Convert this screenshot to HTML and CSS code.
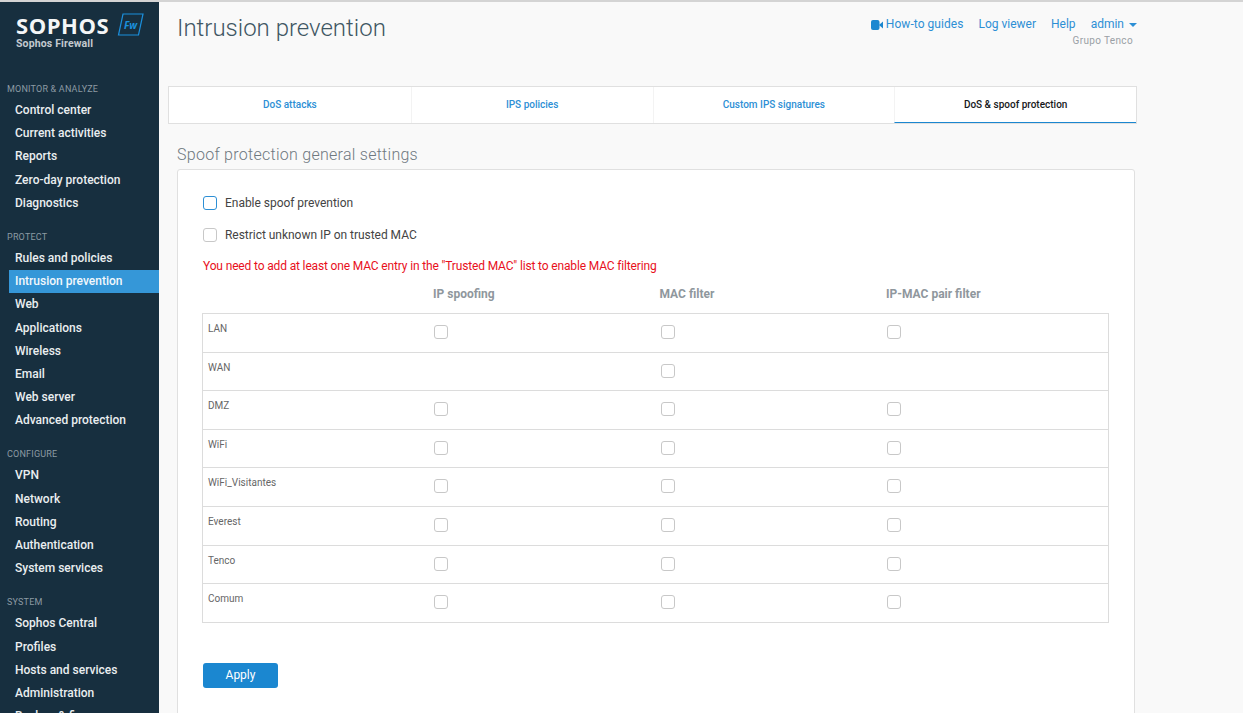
FILE: index.html
```html
<!DOCTYPE html>
<html lang="en">
<head>
<meta charset="utf-8">
<title>Intrusion prevention</title>
<link rel="stylesheet" href="styles.css">
</head>
<body>
<div class="app">
  <aside class="sidebar">
    <div class="brand">
      <div class="brand-top">
        <span class="brand-name">SOPHOS</span>
        <svg class="brand-badge" width="27" height="23" viewBox="0 0 27 23"><path d="M6 1H26L21.500 22H1.500Z" fill="none" stroke="#1b8fdc" stroke-width="1.200"/><text x="7" y="15.500" class="brand-fw">Fw</text></svg>
      </div>
      <div class="brand-sub">Sophos Firewall</div>
    </div>
    <nav class="nav">
      <div class="nav-head first">MONITOR &amp; ANALYZE</div>
      <a class="nav-item">Control center</a>
      <a class="nav-item">Current activities</a>
      <a class="nav-item">Reports</a>
      <a class="nav-item">Zero-day protection</a>
      <a class="nav-item">Diagnostics</a>
      <div class="nav-head">PROTECT</div>
      <a class="nav-item">Rules and policies</a>
      <a class="nav-item active">Intrusion prevention</a>
      <a class="nav-item">Web</a>
      <a class="nav-item">Applications</a>
      <a class="nav-item">Wireless</a>
      <a class="nav-item">Email</a>
      <a class="nav-item">Web server</a>
      <a class="nav-item">Advanced protection</a>
      <div class="nav-head">CONFIGURE</div>
      <a class="nav-item">VPN</a>
      <a class="nav-item">Network</a>
      <a class="nav-item">Routing</a>
      <a class="nav-item">Authentication</a>
      <a class="nav-item">System services</a>
      <div class="nav-head">SYSTEM</div>
      <a class="nav-item">Sophos Central</a>
      <a class="nav-item">Profiles</a>
      <a class="nav-item">Hosts and services</a>
      <a class="nav-item">Administration</a>
      <a class="nav-item">Backup &amp; firmware</a>
    </nav>
  </aside>
  <main class="main">
    <header class="topbar">
      <h1 class="title">Intrusion prevention</h1>
      <div class="account">
        <div class="links">
          <a class="link howto"><svg class="cam" width="12" height="10" viewBox="0 0 12 10"><rect x="0" y="0" width="8.500" height="10" rx="2" fill="#1b87d0"/><path d="M8 5L12 1.500V8.500Z" fill="#1b87d0"/></svg>How-to guides</a>
          <a class="link">Log viewer</a>
          <a class="link">Help</a>
          <a class="link">admin<span class="caret"></span></a>
        </div>
        <div class="org">Grupo Tenco</div>
      </div>
    </header>
    <div class="tabs">
      <a class="tab">DoS attacks</a>
      <a class="tab">IPS policies</a>
      <a class="tab">Custom IPS signatures</a>
      <a class="tab current">DoS &amp; spoof protection</a>
    </div>
    <h2 class="section-title">Spoof protection general settings</h2>
    <section class="card">
      <label class="check-row"><span class="box focus"></span>Enable spoof prevention</label>
      <label class="check-row second"><span class="box"></span>Restrict unknown IP on trusted MAC</label>
      <p class="warning">You need to add at least one MAC entry in the "Trusted MAC" list to enable MAC filtering</p>
      <div class="grid-head">
        <span></span><span>IP spoofing</span><span>MAC filter</span><span>IP-MAC pair filter</span>
      </div>
      <div class="grid">
        <div class="row"><span class="zone">LAN</span><span class="cell"><span class="box"></span></span><span class="cell"><span class="box"></span></span><span class="cell"><span class="box"></span></span></div>
        <div class="row"><span class="zone">WAN</span><span class="cell"></span><span class="cell"><span class="box"></span></span><span class="cell"></span></div>
        <div class="row"><span class="zone">DMZ</span><span class="cell"><span class="box"></span></span><span class="cell"><span class="box"></span></span><span class="cell"><span class="box"></span></span></div>
        <div class="row"><span class="zone">WiFi</span><span class="cell"><span class="box"></span></span><span class="cell"><span class="box"></span></span><span class="cell"><span class="box"></span></span></div>
        <div class="row"><span class="zone">WiFi_Visitantes</span><span class="cell"><span class="box"></span></span><span class="cell"><span class="box"></span></span><span class="cell"><span class="box"></span></span></div>
        <div class="row"><span class="zone">Everest</span><span class="cell"><span class="box"></span></span><span class="cell"><span class="box"></span></span><span class="cell"><span class="box"></span></span></div>
        <div class="row"><span class="zone">Tenco</span><span class="cell"><span class="box"></span></span><span class="cell"><span class="box"></span></span><span class="cell"><span class="box"></span></span></div>
        <div class="row"><span class="zone">Comum</span><span class="cell"><span class="box"></span></span><span class="cell"><span class="box"></span></span><span class="cell"><span class="box"></span></span></div>
      </div>
      <button class="apply" type="button">Apply</button>
    </section>
  </main>
</div>
</body>
</html>
```
FILE: styles.css
```css
* { box-sizing: border-box; }
html, body { margin: 0; height: 100%; overflow: hidden; }
body {
  font-family: Roboto, "Liberation Sans", sans-serif;
  background: #f9f9f9;
  border-top: 2px solid #d4d4d4;
  font-size: 12px;
  color: #444;
}
.app { display: flex; height: 711px; overflow: hidden; }

.sidebar { width: 159px; flex: none; background: #172f3f; color: #eaeef0; overflow: hidden; }
.brand { padding: 12px 0 0 16px; height: 81px; }
.brand-top { display: flex; align-items: flex-start; gap: 10px; }
.brand-name { font: 700 22px/22px "Open Sans", sans-serif; color: #f4f6f7; letter-spacing: .55px; width: 92px; white-space: nowrap; }
.brand-badge { flex: none; margin-top: -1px; margin-left: -1px; }
.brand-fw { font: italic 700 10px "Open Sans", sans-serif; fill: #1b8fdc; }
.brand-sub { font: 700 10.500px/12px Roboto, sans-serif; color: #c3cacf; margin-top: 2px; letter-spacing: .15px; }

.nav { display: flex; flex-direction: column; }
.nav-head { font-size: 9px; line-height: 12px; color: #8c9aa3; padding: 14px 0 0 7px; height: 30px; margin-top: 2px; letter-spacing: .2px; }
.nav-head.first { height: 16px; padding-top: 0; margin-top: 0; }
.nav-item { display: block; height: 23.200px; line-height: 23px; font-weight: 500; font-size: 12px; padding-left: 6px; margin-left: 9px; color: #eaeef0; white-space: nowrap; }
.nav-item.active { background: #3597d8; color: #f2f8fc; }

.main { flex: none; width: 969px; margin-left: 9px; position: relative; }
.topbar { display: flex; justify-content: space-between; align-items: flex-start; height: 84px; }
.title { margin: 11px 0 0 9px; font: 300 24px/30px Roboto, sans-serif; color: #3f5663; }
.account { display: flex; flex-direction: column; align-items: flex-end; padding-top: 15px; }
.links { display: flex; gap: 15px; line-height: 15px; }
.link { color: #2d8fd5; font-size: 12px; display: flex; align-items: center; }
.howto { letter-spacing: .05px; }
.cam { margin-right: 3px; }
.caret { display: inline-block; width: 0; height: 0; border-left: 4px solid transparent; border-right: 4px solid transparent; border-top: 4px solid #2d8fd5; margin-left: 5px; }
.org { font-size: 10px; color: #9aa0a5; line-height: 12px; margin-top: 3px; margin-right: 4px; letter-spacing: .35px; }

.tabs { display: grid; grid-template-columns: repeat(4, 1fr); height: 38px; background: #fff; border: 1px solid #e0e0e0; }
.tab { display: flex; align-items: center; justify-content: center; padding-bottom: 2px; font-size: 10px; font-weight: 500; color: #2d8fd5; border-left: 1px solid #f3f3f3; }
.tab:first-child { border-left: 0; }
.tab.current { color: #16181a; padding-bottom: 0; border-bottom: 1.500px solid #1b87d0; }

.section-title { margin: 21px 0 0 9px; font: 300 16px/20px Roboto, sans-serif; color: #6f787f; letter-spacing: .27px; }
.card { margin: 4px 2px 0 9px; height: 560px; background: #fff; border: 1px solid #e0e0e0; border-radius: 3px 3px 0 0; padding: 25px 25px 0 25px; }

.check-row { display: flex; align-items: center; height: 16px; font-size: 12px; color: #444; letter-spacing: -.03px; }
.check-row .box { margin-right: 8px; }
.check-row.second { margin-top: 16px; }
.box { display: block; flex: none; width: 14px; height: 14px; border: 1px solid #c8c8c8; border-radius: 3px; background: #fff; }
.box.focus { border-color: #2d8fd5; }
.warning { margin: 16px 0 0; font-size: 12px; line-height: 15px; color: #e8101c; letter-spacing: -.15px; }

.grid-head { display: grid; margin-top: 13px; height: 26px; margin-left: -1px; font-size: 12px; font-weight: 700; line-height: 15px; color: #8f979d; padding-left: 8px; grid-template-columns: 223px 226.500px 226.500px 1fr; }
.grid { margin-left: -1px; border: 1px solid #dcdcdc; border-bottom: 0; width: 907px; }
.row { display: grid; height: 38.600px; border-bottom: 1px solid #dcdcdc; padding-left: 5px; grid-template-columns: 226px 226.500px 226.500px 1fr; }
.zone { font-size: 10px; color: #666; line-height: 12px; padding-top: 9px; }
.cell { display: flex; padding-top: 11px; }

.apply { display: block; margin-top: 40px; width: 75px; height: 25px; padding: 0; border: 0; border-radius: 3px; background: #1b87d0; color: #fff; font: 400 12px Roboto, sans-serif; }
```
